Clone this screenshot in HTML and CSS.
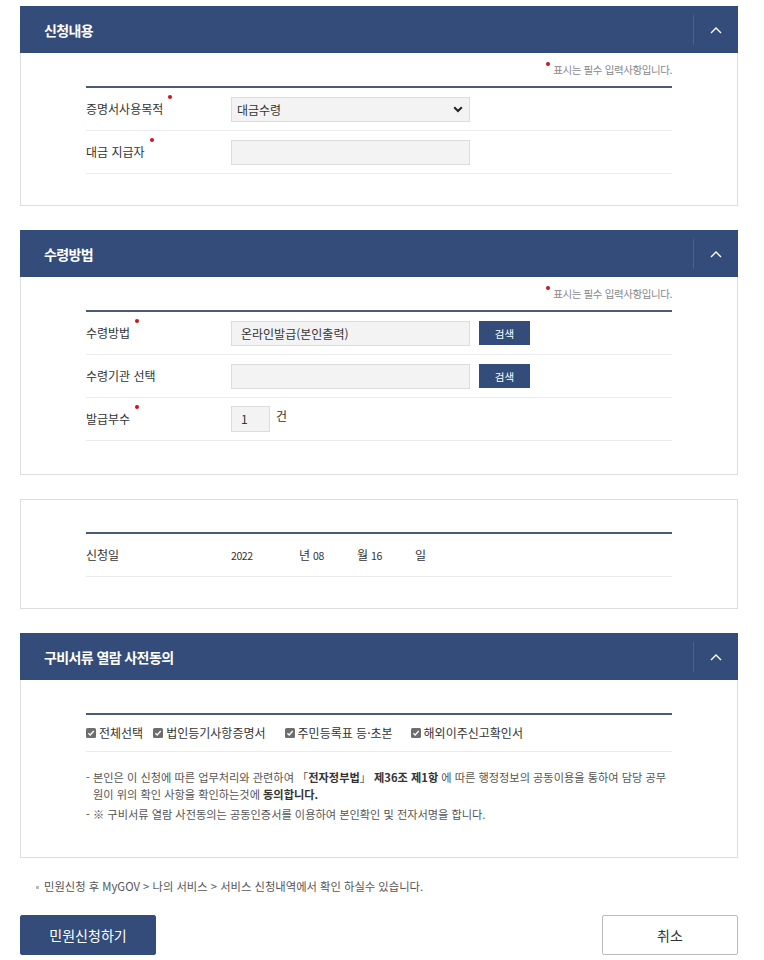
FILE: index.html
```html
<!DOCTYPE html>
<html lang="ko">
<head>
  <meta charset="UTF-8" />
  <meta name="viewport" content="width=device-width, initial-scale=1.0"/>
  <title>민원신청</title>
  <link rel="stylesheet" href="styles.css">
</head>
<body>
  <div class="page">

    <!-- 신청내용 -->
    <section class="panel">
      <div class="panel-head">
        <h2>신청내용</h2>
        <button class="toggle" type="button">
          <svg width="12" height="8" viewBox="0 0 12 8"><polyline points="1,7 6,2 11,7" fill="none" stroke="#fff" stroke-width="1.4"/></svg>
        </button>
      </div>
      <div class="panel-body">
        <p class="req-note"><span class="dot"></span>표시는 필수 입력사항입니다.</p>
        <div class="form-table">
          <div class="row">
            <div class="label">증명서사용목적<span class="dot"></span></div>
            <div class="field">
              <div class="select">
                <span>대금수령</span>
                <svg width="10" height="7" viewBox="0 0 10 7"><polyline points="1.2,1.2 5,5 8.8,1.2" fill="none" stroke="#222" stroke-width="2"/></svg>
              </div>
            </div>
          </div>
          <div class="row">
            <div class="label">대금 지급자<span class="dot"></span></div>
            <div class="field"><div class="input"></div></div>
          </div>
        </div>
      </div>
    </section>

    <!-- 수령방법 -->
    <section class="panel">
      <div class="panel-head">
        <h2>수령방법</h2>
        <button class="toggle" type="button">
          <svg width="12" height="8" viewBox="0 0 12 8"><polyline points="1,7 6,2 11,7" fill="none" stroke="#fff" stroke-width="1.4"/></svg>
        </button>
      </div>
      <div class="panel-body roomy">
        <p class="req-note"><span class="dot"></span>표시는 필수 입력사항입니다.</p>
        <div class="form-table">
          <div class="row">
            <div class="label">수령방법<span class="dot"></span></div>
            <div class="field">
              <div class="input">온라인발급(본인출력)</div>
              <button class="btn-search" type="button">검색</button>
            </div>
          </div>
          <div class="row">
            <div class="label">수령기관 선택</div>
            <div class="field">
              <div class="input"></div>
              <button class="btn-search" type="button">검색</button>
            </div>
          </div>
          <div class="row">
            <div class="label">발급부수<span class="dot"></span></div>
            <div class="field top">
              <div class="input small">1</div>
              <span class="unit">건</span>
            </div>
          </div>
        </div>
      </div>
    </section>

    <!-- 신청일 -->
    <section class="panel">
      <div class="panel-body open">
        <p class="req-note"></p>
        <div class="form-table">
          <div class="row">
            <div class="label">신청일</div>
            <div class="field date">
              <span class="num year">2022</span><span class="unit">년</span>
              <span class="num">08</span><span class="unit">월</span>
              <span class="num">16</span><span class="unit">일</span>
            </div>
          </div>
        </div>
      </div>
    </section>

    <!-- 구비서류 열람 사전동의 -->
    <section class="panel">
      <div class="panel-head">
        <h2>구비서류 열람 사전동의</h2>
        <button class="toggle" type="button">
          <svg width="12" height="8" viewBox="0 0 12 8"><polyline points="1,7 6,2 11,7" fill="none" stroke="#fff" stroke-width="1.4"/></svg>
        </button>
      </div>
      <div class="panel-body">
        <p class="req-note"></p>
        <div class="form-table">
          <div class="row checks">
            <label class="check"><svg width="10" height="10" viewBox="0 0 10 10"><rect width="10" height="10" rx="1.5" fill="#6e6e6e"/><polyline points="2.4,5.2 4.2,7 7.7,3" fill="none" stroke="#fff" stroke-width="1.3"/></svg>전체선택</label>
            <label class="check"><svg width="10" height="10" viewBox="0 0 10 10"><rect width="10" height="10" rx="1.5" fill="#6e6e6e"/><polyline points="2.4,5.2 4.2,7 7.7,3" fill="none" stroke="#fff" stroke-width="1.3"/></svg>법인등기사항증명서</label>
            <label class="check"><svg width="10" height="10" viewBox="0 0 10 10"><rect width="10" height="10" rx="1.5" fill="#6e6e6e"/><polyline points="2.4,5.2 4.2,7 7.7,3" fill="none" stroke="#fff" stroke-width="1.3"/></svg>주민등록표 등·초본</label>
            <label class="check"><svg width="10" height="10" viewBox="0 0 10 10"><rect width="10" height="10" rx="1.5" fill="#6e6e6e"/><polyline points="2.4,5.2 4.2,7 7.7,3" fill="none" stroke="#fff" stroke-width="1.3"/></svg>해외이주신고확인서</label>
          </div>
        </div>
        <ul class="agree">
          <li>- 본인은 이 신청에 따른 업무처리와 관련하여 「<b>전자정부법</b>」 <b>제36조 제1항</b> 에 따른 행정정보의 공동이용을 통하여 담당 공무<br>원이 위의 확인 사항을 확인하는것에 <b>동의합니다.</b></li>
          <li>- ※ 구비서류 열람 사전동의는 공동인증서를 이용하여 본인확인 및 전자서명을 합니다.</li>
        </ul>
      </div>
    </section>

    <p class="foot-note"><span class="sq"></span>민원신청 후 MyGOV &gt; 나의 서비스 &gt; 서비스 신청내역에서 확인 하실수 있습니다.</p>

    <div class="actions">
      <button class="btn primary" type="button">민원신청하기</button>
      <button class="btn" type="button">취소</button>
    </div>

  </div>
</body>
</html>
```

FILE: styles.css
```css
* {
  box-sizing: border-box;
}

body {
  margin: 0;
  font-family: "Noto Sans CJK KR", "Noto Sans", sans-serif;
  color: #333;
  background: #fff;
}

.page {
  width: 718px;
  margin-left: 20px;
  padding-top: 6px;
}

.panel {
  margin-bottom: 24px;
}

.panel-head {
  display: flex;
  align-items: stretch;
  justify-content: space-between;
  height: 47px;
  background-color: #344c79;
  padding-left: 24px;
}

.panel-head h2 {
  margin: 0;
  align-self: center;
  color: #fff;
  font-size: 14px;
  font-weight: 700;
  letter-spacing: -0.6px;
  line-height: 16px;
}

.toggle {
  width: 45px;
  margin: 9px 0 8px;
  padding: 0;
  border: 0;
  border-left: 1px solid #4a5f8a;
  background: transparent;
  display: flex;
  align-items: center;
  justify-content: center;
}

.panel-body {
  border: 1px solid #ddd;
  border-top: 0;
  padding: 10px 65px 31px;
}

.panel-body.roomy {
  padding-bottom: 33px;
}

.panel-body.open {
  border-top: 1px solid #ddd;
  padding-top: 9px;
}

.req-note {
  margin: 0 0 9px;
  height: 14px;
  text-align: right;
  font-size: 10.5px;
  line-height: 14px;
  color: #888;
  letter-spacing: -0.4px;
}

.dot {
  display: inline-block;
  width: 4px;
  height: 4px;
  border-radius: 50%;
  background-color: #d0121b;
  vertical-align: top;
  margin-top: -1px;
  margin-right: 3px;
}

.form-table {
  border-top: 2px solid #4b5a78;
}

.row {
  display: flex;
  align-items: center;
  min-height: 43px;
  padding: 8px 0;
  border-bottom: 1px solid #ebebeb;
}

.label {
  width: 145px;
  font-size: 12px;
  line-height: 16px;
  color: #333;
}

.label .dot {
  margin-left: 5px;
  margin-top: -6px;
}

.field {
  display: flex;
  align-items: center;
  gap: 9px;
  font-size: 12px;
}

.field.top {
  align-items: flex-start;
  gap: 6px;
}

.select,
.input {
  width: 239px;
  height: 25px;
  border: 1px solid #dcdcdc;
  background-color: #f3f3f3;
  padding: 0 9px;
  font-size: 12px;
  line-height: 23px;
  color: #333;
}

.select {
  display: flex;
  align-items: center;
  justify-content: space-between;
  padding: 0 6px 0 5px;
}

.input.small {
  width: 39px;
  height: 26px;
  line-height: 24px;
}

.btn-search {
  width: 51px;
  height: 24px;
  border: 0;
  background-color: #344c79;
  color: #fff;
  font-family: inherit;
  font-size: 10.5px;
  padding: 0;
}

.unit {
  font-size: 12px;
  line-height: 16px;
}

.field.top .unit {
  margin-top: 2px;
}

.field.date {
  gap: 0;
}

.field.date .num {
  font-size: 10.5px;
  letter-spacing: -0.4px;
  width: 44px;
}

.field.date .num.year {
  width: 68px;
}

.field.date .unit {
  width: 14px;
}

.row.checks {
  min-height: 37px;
  padding: 0;
  gap: 0;
}

.check {
  display: inline-flex;
  align-items: center;
  gap: 3px;
  font-size: 12px;
  line-height: 16px;
  margin-right: 10px;
}

.check:nth-child(2) {
  margin-right: 19px;
}

.check:nth-child(3) {
  margin-right: 18px;
}

.agree {
  list-style: none;
  margin: 17px 0 0;
  padding: 0;
  font-size: 11.2px;
  line-height: 17px;
  color: #555;
  letter-spacing: 0;
}

.agree li {
  padding-left: 7px;
  text-indent: -7px;
  margin-bottom: 3px;
}

.agree b {
  color: #333;
}

.foot-note {
  margin: -3px 0 0 16px;
  font-size: 11.3px;
  line-height: 14px;
  color: #555;
  letter-spacing: 0;
}

.sq {
  display: inline-block;
  width: 3px;
  height: 3px;
  background-color: #bbb;
  vertical-align: middle;
  margin-right: 5px;
}

.actions {
  display: flex;
  justify-content: space-between;
  margin-top: 22px;
}

.btn {
  width: 136px;
  height: 40px;
  border: 1px solid #bbb;
  border-radius: 2px;
  background: #fff;
  color: #333;
  font-family: inherit;
  font-size: 14px;
}

.btn.primary {
  background-color: #344c79;
  border-color: #344c79;
  color: #fff;
}
```
